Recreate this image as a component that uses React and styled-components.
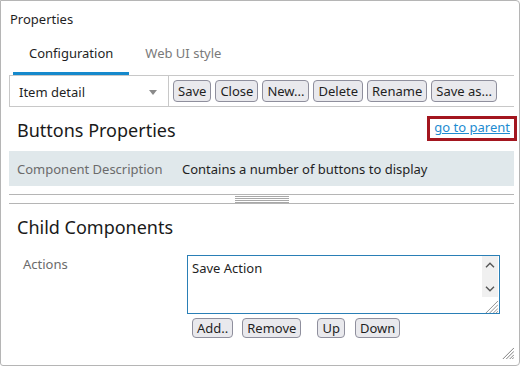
import React from 'react';
import styled, { createGlobalStyle } from 'styled-components';

const GlobalStyle = createGlobalStyle`
  html, body { margin: 0; padding: 0; background: #ffffff; }
  body {
    font-family: "Noto Sans", "Open Sans", sans-serif;
    font-size: 13px;
    color: #1f1f1f;
  }
  * { box-sizing: border-box; }
`;

const Panel = styled.div`
  position: relative;
  width: 520px;
  height: 366px;
  border: 1px solid #b5b5b5;
  border-radius: 0 4px 4px 3px;
  padding: 9px 5px 0 8px;
  background: #fff;
`;

const Title = styled.div`
  line-height: 18px;
  padding-left: 1px;
  color: #1f1f1f;
`;

const TabBar = styled.div`
  display: flex;
  padding-left: 4px;
  border-bottom: 1px solid #c8c8c8;
`;

const Tab = styled.div`
  padding: 15px 16px 9px;
  line-height: 20px;
  color: ${(p) => (p.$active ? '#1f1f1f' : '#7a7a7a')};
  border-bottom: 3px solid ${(p) => (p.$active ? '#1589cc' : 'transparent')};
`;

const Toolbar = styled.div`
  display: flex;
  align-items: center;
  gap: 4px;
  height: 31px;
  border-bottom: 1px solid #c8c8c8;
`;

const Select = styled.div`
  align-self: stretch;
  width: 160px;
  display: flex;
  align-items: center;
  justify-content: space-between;
  padding: 1px 11px 0 9px;
  border-left: 1px solid #c8c8c8;
  border-right: 1px solid #c8c8c8;
  color: #1f1f1f;
`;

const Caret = styled.span`
  width: 0;
  height: 0;
  border-left: 4px solid transparent;
  border-right: 4px solid transparent;
  border-top: 5px solid #8a8a8a;
  margin-top: 1px;
`;

const Button = styled.button`
  font-family: inherit;
  font-size: 13px;
  height: ${(p) => (p.$small ? '20px' : '22px')};
  line-height: ${(p) => (p.$small ? '18px' : '20px')};
  padding: 0 4px;
  margin: 0 0 0 ${(p) => p.$gap || 0}px;
  border: 1px solid #8f8f9d;
  border-radius: 4px;
  background: #e9e9ed;
  color: #1f1f1f;
`;

const Header = styled.div`
  display: flex;
  justify-content: space-between;
  align-items: flex-start;
  padding: 11px 0 9px 8px;
`;

const Heading = styled.h2`
  margin: ${(p) => (p.$section ? '11px 0 0 8px' : '0')};
  font-size: 18px;
  font-weight: 400;
  line-height: 24px;
  color: #1a1a1a;
`;

const ParentLink = styled.a`
  display: inline-block;
  margin-top: 1px;
  padding: 0 4px 2px 4px;
  line-height: 17px;
  color: #1d8bd1;
  text-decoration: underline;
  outline: 3px solid #a3161f;
  cursor: pointer;
`;

const DescRow = styled.div`
  display: flex;
  align-items: center;
  height: 35px;
  padding-left: 8px;
  background: #e0e8eb;
`;

const DescLabel = styled.span`
  width: 165px;
  color: #6b6b6b;
`;

const DescValue = styled.span`
  color: #1f1f1f;
`;

const Splitter = styled.div`
  margin-top: 8px;
  height: 10px;
  border-top: 1px solid #b5b5b5;
  border-bottom: 1px solid #b5b5b5;
  display: flex;
  justify-content: center;
  align-items: center;
`;

const Grip = styled.div`
  width: 54px;
  height: 7px;
  background: repeating-linear-gradient(
    to bottom,
    #a8a8a8 0,
    #a8a8a8 1px,
    transparent 1px,
    transparent 2px
  );
`;

const FieldRow = styled.div`
  display: flex;
  margin-top: 16px;
  padding-left: 14px;
`;

const FieldLabel = styled.div`
  width: 164px;
  line-height: 18px;
  color: #6b6b6b;
`;

const TextBox = styled.div`
  width: 313px;
  height: 59px;
  border: 1px solid #2a7fb6;
  display: flex;
`;

const TextContent = styled.div`
  flex: 1;
  padding: 3px 4px;
  line-height: 18px;
  color: #1f1f1f;
`;

const ScrollColumn = styled.div`
  width: 16px;
  margin-right: 1px;
  display: flex;
  flex-direction: column;
`;

const ScrollTrack = styled.div`
  height: 41px;
  background: #f0f0f0;
  display: flex;
  flex-direction: column;
  justify-content: space-between;
  align-items: center;
  padding: 6px 0 5px;
`;

const ResizeCorner = styled.div`
  flex: 1;
  display: flex;
  justify-content: flex-end;
  align-items: flex-end;
`;

const ButtonRow = styled.div`
  display: flex;
  margin-top: 4px;
  padding-left: 183px;
`;

const PanelGrip = styled.div`
  position: absolute;
  right: 5px;
  bottom: 6px;
  width: 12px;
  height: 12px;
  display: flex;
`;

const Chevron = ({ dir }) => (
  <svg width="10" height="6" viewBox="0 0 10 6">
    <path
      d={dir === 'up' ? 'M1 5.2 L5 1.2 L9 5.2' : 'M1 0.8 L5 4.8 L9 0.8'}
      stroke="#555"
      strokeWidth="1.4"
      fill="none"
    />
  </svg>
);

const Hatch = ({ color, size }) => (
  <svg width={size} height={size} viewBox="0 0 14 14">
    <g stroke={color} strokeWidth="1" fill="none">
      <path d="M14 1 L1 14" />
      <path d="M14 5 L5 14" />
      <path d="M14 9 L9 14" />
      <path d="M14 12 L12 14" />
    </g>
  </svg>
);

export default function App() {
  return (
    <>
      <GlobalStyle />
      <Panel>
        <Title>Properties</Title>
        <TabBar>
          <Tab $active>Configuration</Tab>
          <Tab>Web UI style</Tab>
        </TabBar>
        <Toolbar>
          <Select>
            <span>Item detail</span>
            <Caret />
          </Select>
          <Button>Save</Button>
          <Button>Close</Button>
          <Button>New...</Button>
          <Button>Delete</Button>
          <Button>Rename</Button>
          <Button>Save as...</Button>
        </Toolbar>
        <Header>
          <Heading>Buttons Properties</Heading>
          <ParentLink>go to parent</ParentLink>
        </Header>
        <DescRow>
          <DescLabel>Component Description</DescLabel>
          <DescValue>Contains a number of buttons to display</DescValue>
        </DescRow>
        <Splitter>
          <Grip />
        </Splitter>
        <Heading $section>Child Components</Heading>
        <FieldRow>
          <FieldLabel>Actions</FieldLabel>
          <TextBox>
            <TextContent>Save Action</TextContent>
            <ScrollColumn>
              <ScrollTrack>
                <Chevron dir="up" />
                <Chevron dir="down" />
              </ScrollTrack>
              <ResizeCorner>
                <Hatch color="#8a8a8a" size={13} />
              </ResizeCorner>
            </ScrollColumn>
          </TextBox>
        </FieldRow>
        <ButtonRow>
          <Button $small>Add..</Button>
          <Button $small $gap={9}>Remove</Button>
          <Button $small $gap={16}>Up</Button>
          <Button $small $gap={10}>Down</Button>
        </ButtonRow>
        <PanelGrip>
          <Hatch color="#6e6e6e" size={12} />
        </PanelGrip>
      </Panel>
    </>
  );
}
